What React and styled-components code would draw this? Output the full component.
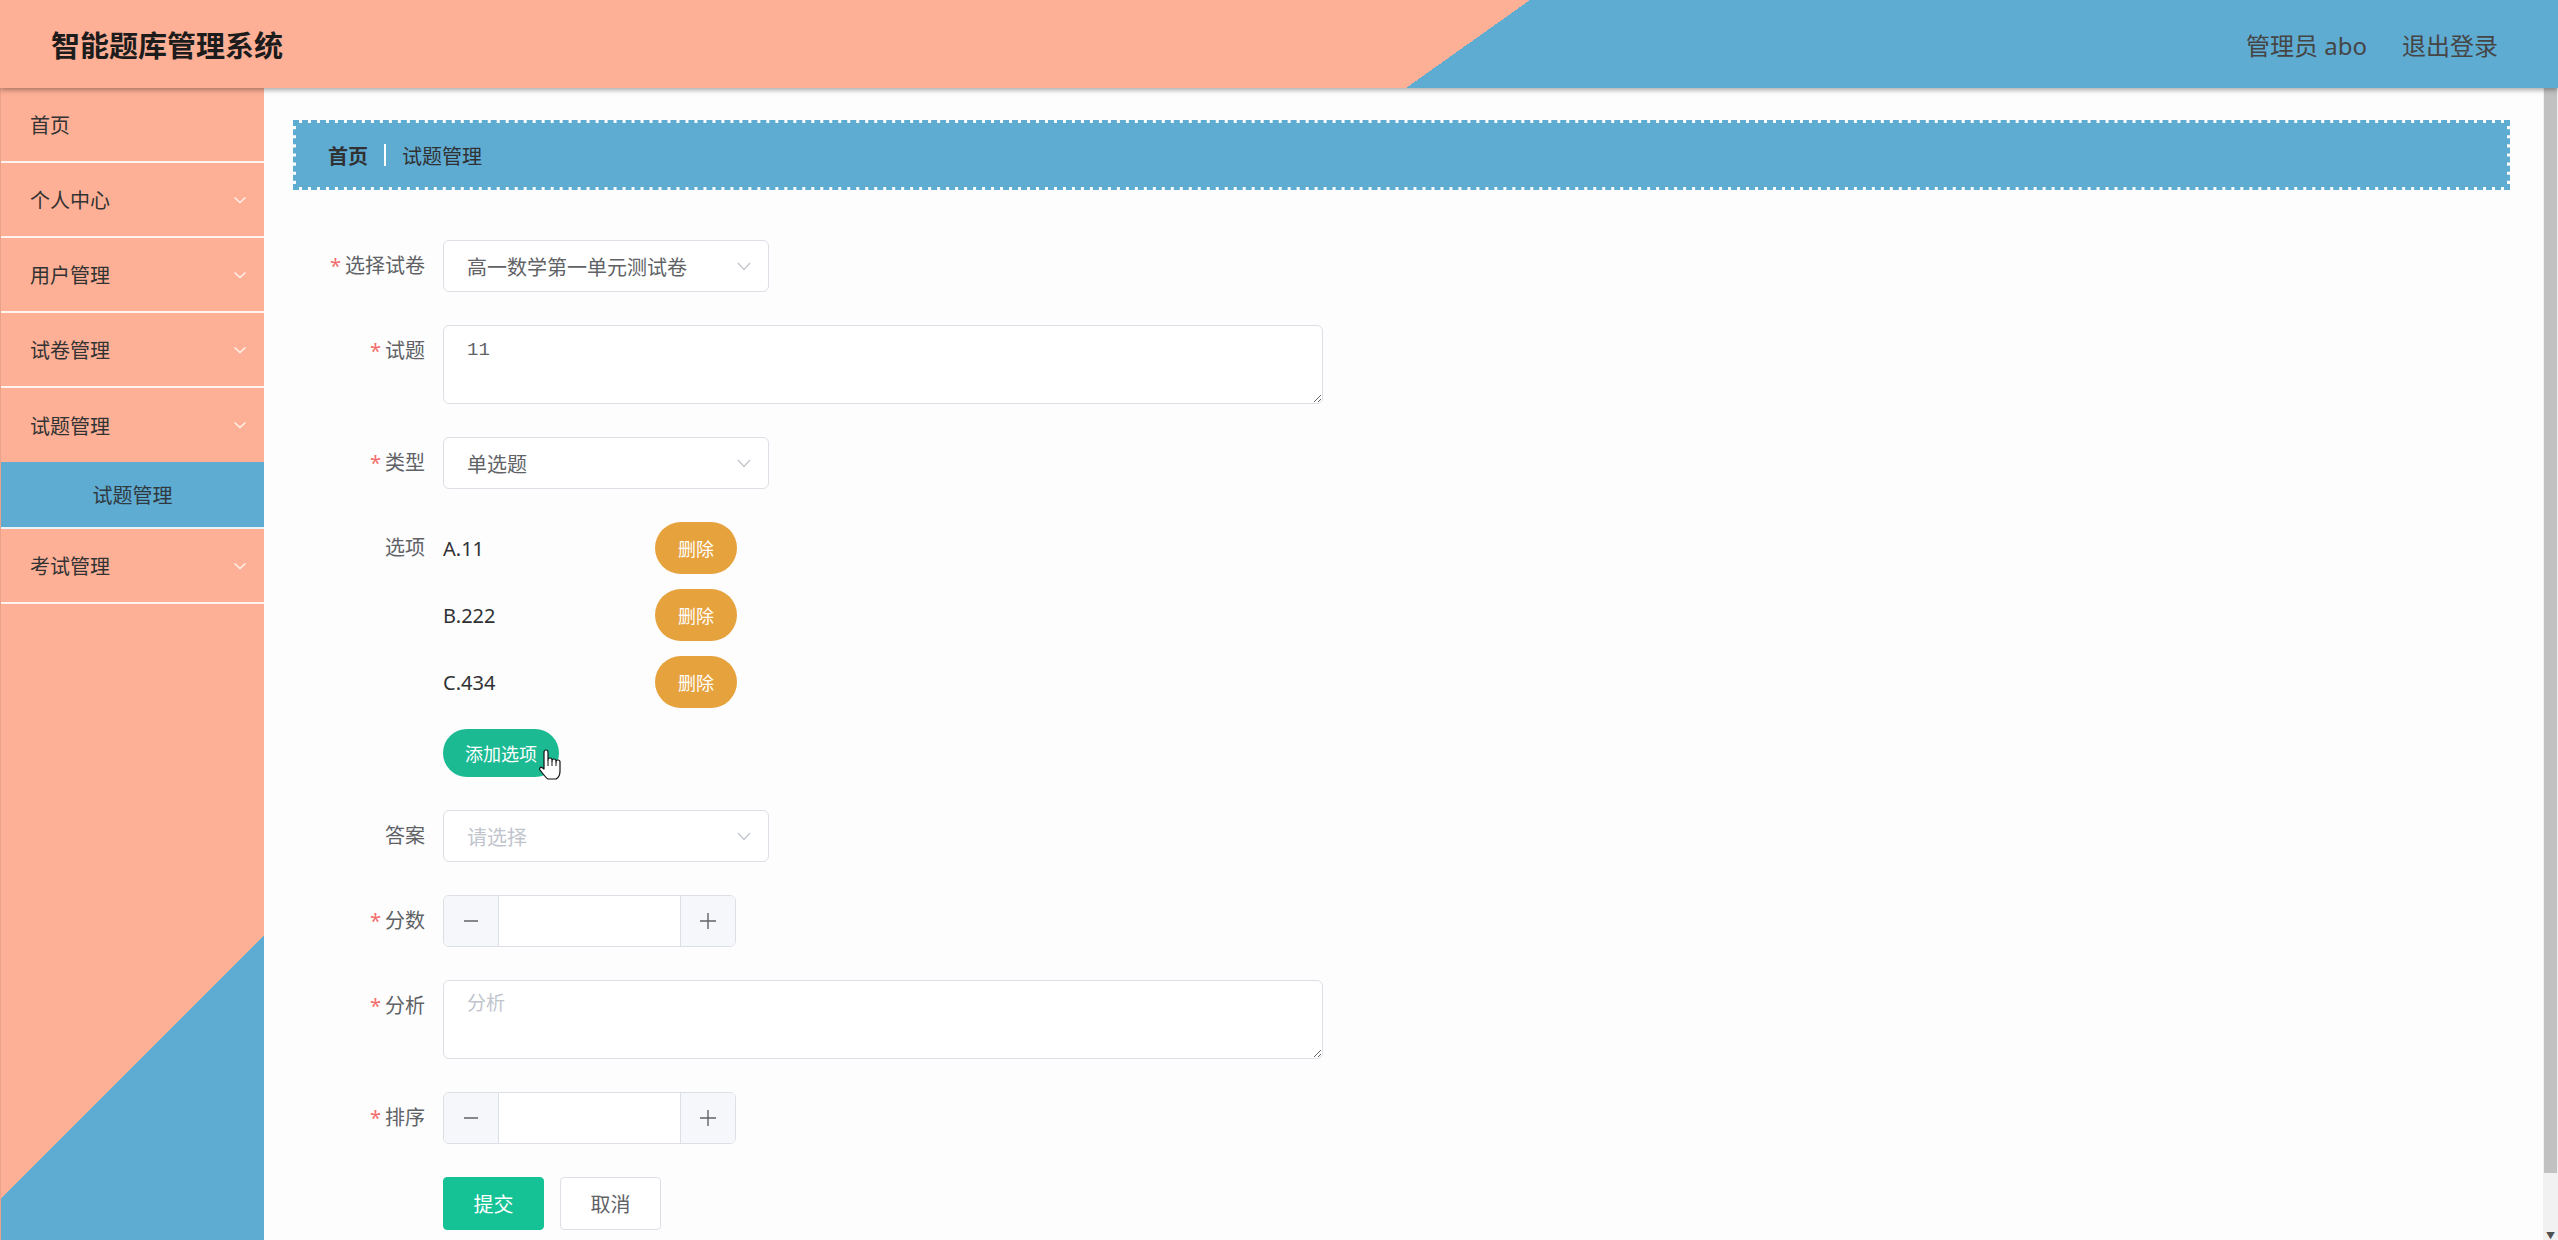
import React from 'react';
import styled, { createGlobalStyle } from 'styled-components';

const SALMON = '#feb096';
const BLUE = '#5facd3';

const GlobalStyle = createGlobalStyle`
  html, body {
    margin: 0;
    padding: 0;
    height: 100%;
    overflow: hidden;
  }
  body {
    font-family: "Noto Sans", "Noto Sans CJK SC", sans-serif;
    color: #303133;
  }
  * {
    box-sizing: border-box;
  }
`;

const Shell = styled.div`
  display: flex;
  flex-direction: column;
  height: 100vh;
`;

const Header = styled.header`
  position: relative;
  z-index: 2;
  flex: none;
  height: 88px;
  display: flex;
  align-items: center;
  justify-content: space-between;
  padding: 0 60px 0 51px;
  background:
    linear-gradient(to bottom right, ${SALMON} 50%, ${BLUE} 50%) 1406px 0 / 124px 100% no-repeat,
    linear-gradient(to right, ${SALMON} 1406px, ${BLUE} 1406px);
  box-shadow: 0 2px 5px rgba(0, 0, 0, 0.35);
`;

const Title = styled.h1`
  margin: 0;
  font-size: 29px;
  font-weight: 700;
  color: #1c1c1c;
`;

const UserBar = styled.div`
  display: flex;
  gap: 35px;
  font-size: 24px;
  color: #454545;
`;

const Body = styled.div`
  flex: 1;
  display: flex;
  min-height: 0;
`;

const Sidebar = styled.nav`
  flex: none;
  width: 264px;
  background:
    linear-gradient(to bottom right, transparent 50%, ${BLUE} 50%) left bottom 42px / 100% 262px no-repeat,
    linear-gradient(${BLUE}, ${BLUE}) left bottom / 100% 42px no-repeat,
    ${SALMON};
  border-left: 1px solid rgba(0, 0, 0, 0.08);
`;

const MenuItem = styled.div`
  height: ${p => (p.open ? '74px' : '75px')};
  display: flex;
  align-items: center;
  justify-content: space-between;
  padding: 0 16px 0 29px;
  font-size: 20px;
  color: #333;
  border-bottom: ${p => (p.open ? 'none' : '2px solid rgba(255, 255, 255, 0.85)')};
`;

const SubItem = styled.div`
  height: 67px;
  display: flex;
  align-items: center;
  justify-content: center;
  font-size: 20px;
  color: #2f3a40;
  background: ${BLUE};
  border-bottom: 2px solid rgba(255, 255, 255, 0.85);
`;

const Main = styled.main`
  flex: 1;
  overflow: hidden;
  background: #fdfdfd;
  padding: 32px 33px 30px 29px;
`;

const ScrollTrack = styled.div`
  flex: none;
  width: 15px;
  display: flex;
  flex-direction: column;
  background: #f1f1f1;
`;

const ScrollThumb = styled.div`
  height: 1085px;
  margin: 0 1px;
  background: #c1c1c1;
`;

const ScrollArrow = styled.div`
  margin-top: auto;
  height: 8px;
  display: flex;
  justify-content: center;
  align-items: flex-end;
  font-size: 9px;
  line-height: 1;
  color: #505050;
`;

const Breadcrumb = styled.div`
  height: 70px;
  display: flex;
  align-items: center;
  padding: 0 32px;
  border: 3px dashed ${BLUE};
  background: ${BLUE};
  background-clip: padding-box;
  font-size: 20px;
  color: #303133;
`;

const Crumb = styled.span`
  font-weight: ${p => (p.strong ? 700 : 400)};
`;

const CrumbSep = styled.span`
  width: 2px;
  height: 22px;
  margin: 0 16px;
  background: #fff;
`;

const Form = styled.form`
  margin-top: 50px;
`;

const FormItem = styled.div`
  display: flex;
  align-items: flex-start;
  margin-bottom: 33px;
`;

const Label = styled.label`
  flex: none;
  width: 150px;
  padding-right: 18px;
  text-align: right;
  line-height: 52px;
  font-size: 20px;
  color: #606266;
`;

const Star = styled.span`
  color: #f56c6c;
  margin-right: 4px;
`;

const Control = styled.div`
  display: flex;
  flex-direction: column;
  align-items: flex-start;
`;

const Select = styled.div`
  width: 326px;
  height: 52px;
  display: flex;
  align-items: center;
  justify-content: space-between;
  padding: 0 14px 0 23px;
  border: 1px solid #dcdfe6;
  border-radius: 6px;
  background: #fff;
  font-size: 20px;
  color: ${p => (p.placeholder ? '#c0c4cc' : '#606266')};
`;

const TextArea = styled.textarea`
  width: 880px;
  height: 79px;
  padding: 9px 23px;
  border: 1px solid #dcdfe6;
  border-radius: 6px;
  background: #fff;
  font-family: "Liberation Mono", "Noto Sans CJK SC", monospace;
  font-size: 19px;
  line-height: 1.6;
  color: #606266;
  resize: vertical;
  outline: none;

  &::placeholder {
    color: #c0c4cc;
  }
`;

const OptionList = styled.div`
  display: flex;
  flex-direction: column;
  gap: 15px;
`;

const OptionRow = styled.div`
  display: flex;
  align-items: center;
  height: 52px;
`;

const OptionText = styled.span`
  width: 212px;
  font-size: 20px;
  color: #303133;
`;

const PillButton = styled.button`
  position: relative;
  width: ${p => p.w}px;
  height: ${p => p.h}px;
  border: none;
  border-radius: 26px;
  background: ${p => p.bg};
  color: #fff;
  font-family: inherit;
  font-size: 18px;
  padding: 0;
  cursor: pointer;
`;

const AddWrap = styled.div`
  margin-top: 21px;
`;

const Cursor = styled.svg`
  position: absolute;
  left: 95px;
  top: 20px;
  pointer-events: none;
`;

const NumberBox = styled.div`
  width: 293px;
  height: 52px;
  display: flex;
  border: 1px solid #dcdfe6;
  border-radius: 6px;
  overflow: hidden;
  background: #fff;
`;

const Stepper = styled.span`
  flex: none;
  width: 55px;
  display: flex;
  align-items: center;
  justify-content: center;
  background: #f5f7fa;
  border-left: ${p => (p.side === 'right' ? '1px solid #dcdfe6' : 'none')};
  border-right: ${p => (p.side === 'left' ? '1px solid #dcdfe6' : 'none')};
`;

const NumberField = styled.span`
  flex: 1;
`;

const Actions = styled.div`
  display: flex;
  gap: 16px;
`;

const Button = styled.button`
  width: 101px;
  height: 53px;
  border-radius: 4px;
  border: 1px solid ${p => (p.primary ? '#15c295' : '#dcdfe6')};
  background: ${p => (p.primary ? '#15c295' : '#fff')};
  color: ${p => (p.primary ? '#fff' : '#606266')};
  font-family: inherit;
  font-size: 20px;
  padding: 0;
  cursor: pointer;
`;

const MenuChevron = () => (
  <svg width="16" height="16" viewBox="0 0 16 16">
    <polyline points="2.5,5.5 8,10.5 13.5,5.5" fill="none" stroke="rgba(255,255,255,0.8)" strokeWidth="1.6" />
  </svg>
);

const SelectChevron = () => (
  <svg width="20" height="20" viewBox="0 0 20 20">
    <polyline points="4,7 10,13.5 16,7" fill="none" stroke="#c0c4cc" strokeWidth="1.2" />
  </svg>
);

const MinusIcon = () => (
  <svg width="18" height="18" viewBox="0 0 18 18">
    <line x1="2" y1="9" x2="16" y2="9" stroke="#606266" strokeWidth="1.4" />
  </svg>
);

const PlusIcon = () => (
  <svg width="18" height="18" viewBox="0 0 18 18">
    <line x1="1" y1="9" x2="17" y2="9" stroke="#606266" strokeWidth="1.4" />
    <line x1="9" y1="1" x2="9" y2="17" stroke="#606266" strokeWidth="1.4" />
  </svg>
);

const HandCursor = () => (
  <Cursor width="24" height="32" viewBox="0 0 24 32">
    <path
      d="M6,3 a2,2 0 0 1 4,0 V11 a2,2 0 0 1 4,0 v1 a2,2 0 0 1 4,0 v1 a2,2 0 0 1 4,0 V22 c0,4 -2,7 -4,8 H10 c-2,-1 -5,-5 -8,-9 c-1,-1.5 0.5,-3.5 2,-2.5 L6,20 Z"
      fill="#fff"
      stroke="#111"
      strokeWidth="1.2"
      strokeLinejoin="round"
    />
    <path d="M10,11 v6 M14,12 v5 M18,13 v4" stroke="#111" strokeWidth="1" />
  </Cursor>
);

const menu = [
  { title: '首页' },
  { title: '个人中心', sub: true },
  { title: '用户管理', sub: true },
  { title: '试卷管理', sub: true },
  { title: '试题管理', sub: true, open: true, children: ['试题管理'] },
  { title: '考试管理', sub: true },
];

const options = ['A.11', 'B.222', 'C.434'];

const Field = ({ label, required, children }) => (
  <FormItem>
    <Label>
      {required && <Star>*</Star>}
      {label}
    </Label>
    <Control>{children}</Control>
  </FormItem>
);

const NumberInput = () => (
  <NumberBox>
    <Stepper side="left"><MinusIcon /></Stepper>
    <NumberField />
    <Stepper side="right"><PlusIcon /></Stepper>
  </NumberBox>
);

export default function App() {
  return (
    <Shell>
      <GlobalStyle />
      <Header>
        <Title>智能题库管理系统</Title>
        <UserBar>
          <span>管理员 abo</span>
          <span>退出登录</span>
        </UserBar>
      </Header>
      <Body>
        <Sidebar>
          {menu.map(item => (
            <React.Fragment key={item.title}>
              <MenuItem open={item.open}>
                <span>{item.title}</span>
                {item.sub && <MenuChevron />}
              </MenuItem>
              {item.open && item.children.map(c => <SubItem key={c}>{c}</SubItem>)}
            </React.Fragment>
          ))}
        </Sidebar>
        <Main>
          <Breadcrumb>
            <Crumb strong>首页</Crumb>
            <CrumbSep />
            <Crumb>试题管理</Crumb>
          </Breadcrumb>
          <Form onSubmit={e => e.preventDefault()}>
            <Field label="选择试卷" required>
              <Select>
                <span>高一数学第一单元测试卷</span>
                <SelectChevron />
              </Select>
            </Field>
            <Field label="试题" required>
              <TextArea defaultValue="11" />
            </Field>
            <Field label="类型" required>
              <Select>
                <span>单选题</span>
                <SelectChevron />
              </Select>
            </Field>
            <Field label="选项">
              <OptionList>
                {options.map(o => (
                  <OptionRow key={o}>
                    <OptionText>{o}</OptionText>
                    <PillButton type="button" w={82} h={52} bg="#e6a23c">删除</PillButton>
                  </OptionRow>
                ))}
              </OptionList>
              <AddWrap>
                <PillButton type="button" w={116} h={48} bg="#1bba93">
                  添加选项
                  <HandCursor />
                </PillButton>
              </AddWrap>
            </Field>
            <Field label="答案">
              <Select placeholder>
                <span>请选择</span>
                <SelectChevron />
              </Select>
            </Field>
            <Field label="分数" required>
              <NumberInput />
            </Field>
            <Field label="分析" required>
              <TextArea placeholder="分析" />
            </Field>
            <Field label="排序" required>
              <NumberInput />
            </Field>
            <FormItem>
              <Label />
              <Actions>
                <Button type="button" primary>提交</Button>
                <Button type="button">取消</Button>
              </Actions>
            </FormItem>
          </Form>
        </Main>
        <ScrollTrack>
          <ScrollThumb />
          <ScrollArrow>▼</ScrollArrow>
        </ScrollTrack>
      </Body>
    </Shell>
  );
}
